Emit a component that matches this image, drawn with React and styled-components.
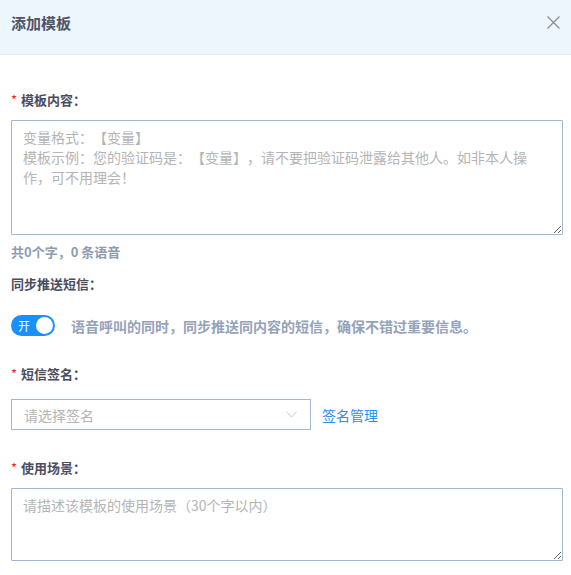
import React from 'react';
import styled, { createGlobalStyle } from 'styled-components';

const GlobalStyle = createGlobalStyle`
  html, body {
    margin: 0;
    padding: 0;
    background: #fff;
  }
  body {
    font-family: "Noto Sans CJK SC", "Noto Sans", sans-serif;
    font-size: 14px;
    color: #4a4d60;
  }
  * {
    box-sizing: border-box;
    text-spacing-trim: space-all;
  }
  textarea::placeholder {
    text-spacing-trim: space-all;
  }
`;

const Dialog = styled.div`
  width: 571px;
  background: #fff;
`;

const Header = styled.div`
  height: 55px;
  display: flex;
  align-items: center;
  justify-content: space-between;
  padding: 0 6px 0 11px;
  background: #edf5fd;
  border-bottom: 1px solid #e2e8ef;
`;

const Title = styled.span`
  font-size: 15px;
  font-weight: 700;
  color: #505366;
  margin-top: -10px;
`;

const CloseBtn = styled.div`
  width: 24px;
  height: 24px;
  display: flex;
  align-items: center;
  justify-content: center;
  margin-top: -10px;
  cursor: pointer;
`;

const Body = styled.div`
  padding: 35px 8px 0 11px;
`;

const Item = styled.div`
  margin-bottom: ${props => props.gap || 0}px;
`;

const Label = styled.div`
  display: flex;
  align-items: center;
  height: 20px;
  line-height: 20px;
  font-size: 13px;
  font-weight: 700;
  color: #4a4d60;
  margin-bottom: ${props => props.gap || 10}px;
`;

const Star = styled.span`
  color: #f5222d;
  font-weight: 400;
  font-size: 13px;
  margin-right: 4px;
`;

const TextArea = styled.textarea`
  display: block;
  width: 100%;
  height: ${props => props.h}px;
  padding: 6px 11px;
  border: 1px solid #a3b7cf;
  border-radius: 1px;
  font-family: inherit;
  font-size: 14px;
  line-height: 20px;
  color: #4a4d60;
  outline: none;
  &::placeholder {
    color: #b4b4b4;
  }
`;

const Counter = styled.div`
  margin-top: 7px;
  line-height: 20px;
  font-size: 13px;
  font-weight: 700;
  color: #8e9bb0;
`;

const SwitchRow = styled.div`
  display: flex;
  align-items: center;
  gap: 16px;
`;

const Switch = styled.div`
  position: relative;
  width: 44px;
  height: 21px;
  border-radius: 11px;
  background: #1890ff;
  display: flex;
  align-items: center;
  padding-left: 7px;
  color: #fff;
  font-size: 12px;
`;

const Knob = styled.span`
  position: absolute;
  right: 2px;
  top: 2px;
  width: 17px;
  height: 17px;
  border-radius: 50%;
  background: #fff;
`;

const Hint = styled.span`
  font-size: 14px;
  font-weight: 700;
  color: #95a2b8;
`;

const SelectRow = styled.div`
  display: flex;
  align-items: center;
  gap: 11px;
`;

const Select = styled.div`
  width: 300px;
  height: 31px;
  display: flex;
  align-items: center;
  justify-content: space-between;
  padding: 0 13px 0 12px;
  border: 1px solid #a3b7cf;
  font-size: 14px;
  color: #b4b4b4;
`;

const Link = styled.a`
  font-size: 14px;
  color: #2b8ff0;
  text-decoration: none;
  cursor: pointer;
`;

const Chevron = () => (
  <svg width="11" height="7" viewBox="0 0 11 7" fill="none">
    <path d="M0.5 0.5L5.5 6L10.5 0.5" stroke="#c4c8cf" strokeWidth="1" />
  </svg>
);

const CloseIcon = () => (
  <svg width="13" height="13" viewBox="0 0 13 13" fill="none">
    <path d="M0.5 0.5L12.5 12.5M12.5 0.5L0.5 12.5" stroke="#8f8f8f" strokeWidth="1.3" />
  </svg>
);

const App = () => {
  return (
    <Dialog>
      <GlobalStyle />
      <Header>
        <Title>添加模板</Title>
        <CloseBtn><CloseIcon /></CloseBtn>
      </Header>
      <Body>
        <Item gap={12}>
          <Label><Star>*</Star>模板内容：</Label>
          <TextArea
            h={115}
            placeholder={'变量格式：【变量】\n模板示例：您的验证码是：【变量】，请不要把验证码泄露给其他人。如非本人操作，可不用理会！'}
          />
          <Counter>共0个字，0 条语音</Counter>
        </Item>
        <Item gap={28}>
          <Label gap={21}>同步推送短信：</Label>
          <SwitchRow>
            <Switch>开<Knob /></Switch>
            <Hint>语音呼叫的同时，同步推送同内容的短信，确保不错过重要信息。</Hint>
          </SwitchRow>
        </Item>
        <Item gap={28}>
          <Label gap={15}><Star>*</Star>短信签名：</Label>
          <SelectRow>
            <Select>
              <span>请选择签名</span>
              <Chevron />
            </Select>
            <Link>签名管理</Link>
          </SelectRow>
        </Item>
        <Item>
          <Label><Star>*</Star>使用场景：</Label>
          <TextArea h={73} placeholder="请描述该模板的使用场景（30个字以内）" />
        </Item>
      </Body>
    </Dialog>
  );
};

export default App;
